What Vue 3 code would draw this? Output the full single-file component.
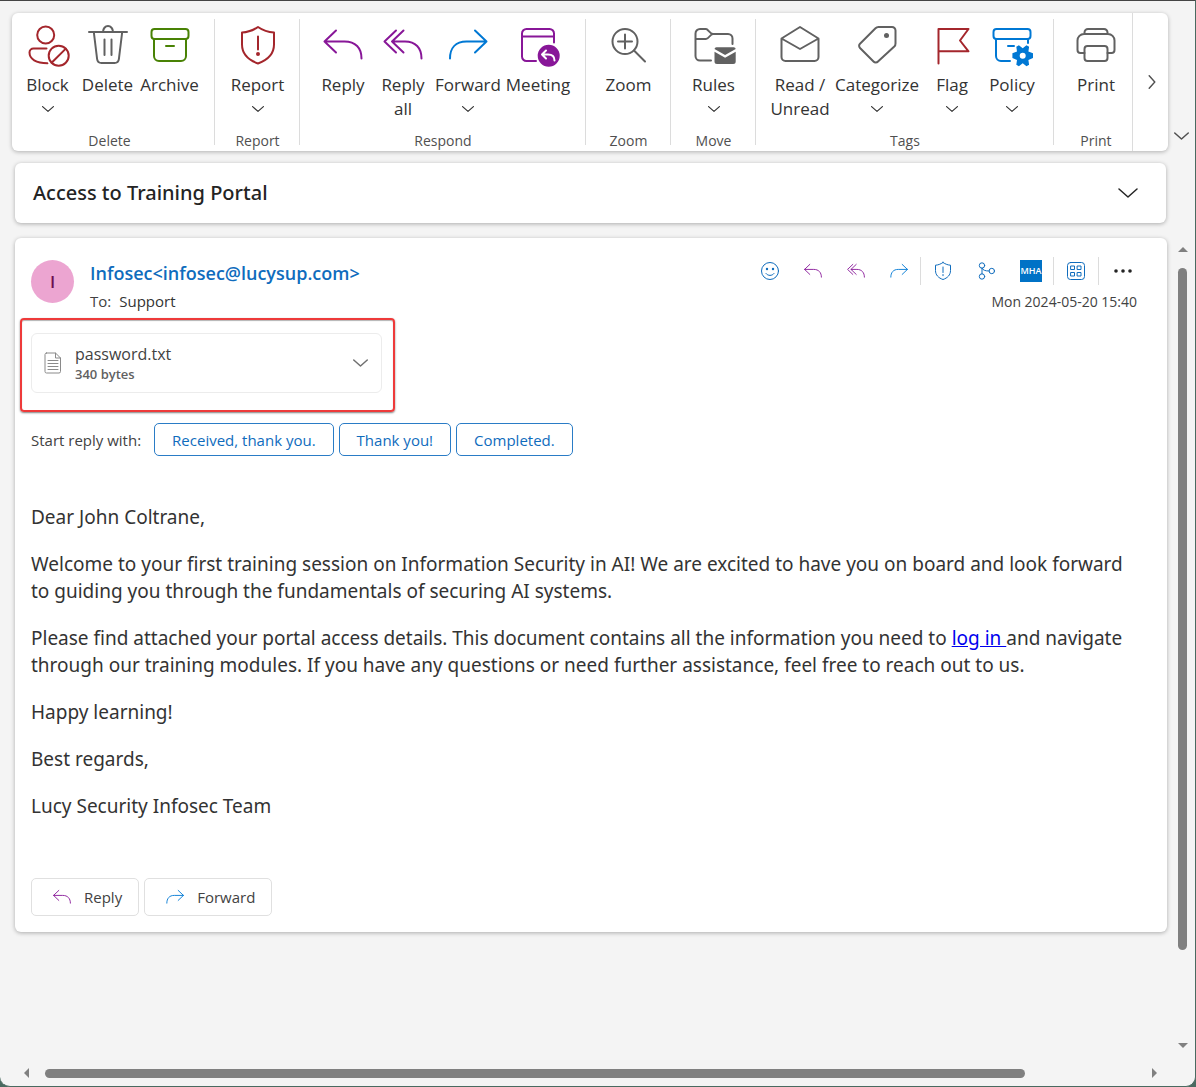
<script setup>
import { ref } from 'vue'

const groups = [
  {
    name: 'Delete', kind: 'delete', items: [
      { label: 'Block', icon: 'block', menu: true },
      { label: 'Delete', icon: 'trash' },
      { label: 'Archive', icon: 'archive', size: 'wide' },
    ],
  },
  { name: 'Report', kind: 'single', items: [{ label: 'Report', icon: 'shield', menu: true }] },
  {
    name: 'Respond', kind: 'respond', items: [
      { label: 'Reply', icon: 'reply' },
      { label: 'Reply all', icon: 'replyall' },
      { label: 'Forward', icon: 'forward', menu: true, size: 'medium' },
      { label: 'Meeting', icon: 'meeting', size: 'medium' },
    ],
  },
  { name: 'Zoom', kind: 'single', items: [{ label: 'Zoom', icon: 'zoom' }] },
  { name: 'Move', kind: 'single', items: [{ label: 'Rules', icon: 'rules', menu: true }] },
  {
    name: 'Tags', kind: 'tags', items: [
      { label: 'Read / Unread', icon: 'read', size: 'wide' },
      { label: 'Categorize', icon: 'tag', menu: true, size: 'large' },
      { label: 'Flag', icon: 'flag', menu: true },
      { label: 'Policy', icon: 'policy', menu: true },
    ],
  },
  { name: 'Print', kind: 'print', items: [{ label: 'Print', icon: 'print' }] },
]

const suggestions = ['Received, thank you.', 'Thank you!', 'Completed.']
const draft = ref('')
</script>

<template>
  <div class="window">
    <svg class="defs" aria-hidden="true">
      <symbol id="block" viewBox="0 0 44 44">
        <g stroke="#a4262c">
          <circle cx="19.7" cy="12" r="8.5" />
          <path d="M20.5 25.6H7.5a4 4 0 0 0-4 4c0 6.500 6.500 10.700 18 10.700" />
          <circle cx="32.700" cy="32.700" r="12.500" fill="#fff" stroke="none" />
          <circle cx="32.700" cy="32.700" r="10" />
          <path d="M25.600 39.800l14.200-14.200" />
        </g>
      </symbol>
      <symbol id="trash" viewBox="0 0 44 44">
        <g stroke="#616161">
          <path d="M3 9h38M17 9a5 6 0 0 1 10 0M7.800 9l3.300 27a4.500 4.500 0 0 0 4.500 4h12.800a4.500 4.500 0 0 0 4.500-4L36.200 9M18.500 16.500v15.500M25.500 16.500v15.500" />
        </g>
      </symbol>
      <symbol id="archive" viewBox="0 0 44 44">
        <g stroke="#498205">
          <rect x="3.500" y="6" width="37" height="10" rx="3" />
          <path d="M6 16v17a5 5 0 0 0 5 5h22a5 5 0 0 0 5-5V16M18 23h8" />
        </g>
      </symbol>
      <symbol id="shield" viewBox="0 0 44 44">
        <g stroke="#a4262c">
          <path d="M22 4c-5 3.500-10 5.200-16 5.500v12C6 31 12.500 37 22 40.500 31.500 37 38 31 38 21.500v-12C32 9.200 27 7.500 22 4zM22 13.500v13" />
          <circle cx="22" cy="31" r="1" />
        </g>
      </symbol>
      <symbol id="reply" viewBox="0 0 44 44">
        <path stroke="#881798" d="M15 7.500l-11.500 11 11.500 11M3.500 18.500h20c11 0 17 6.500 17 17" />
      </symbol>
      <symbol id="replyall" viewBox="0 0 44 44">
        <path stroke="#881798" d="M15 7.500l-11.500 11 11.500 11M22.500 7.500L11 18.500l11.500 11M11 18.500h13c10.500 0 16.500 6.500 16.500 17" />
      </symbol>
      <symbol id="forward" viewBox="0 0 44 44">
        <path stroke="#0078d4" d="M29 7.500l11.500 11L29 29.500M40.500 18.500h-20c-11 0-16.500 6.500-16.500 17" />
      </symbol>
      <symbol id="meeting" viewBox="0 0 44 44">
        <g stroke="#881798">
          <path d="M20 38h-9.500a4.500 4.500 0 0 1-4.500-4.500v-23A4.500 4.500 0 0 1 10.500 6h23a4.500 4.500 0 0 1 4.500 4.500v9M6 13.500h32" />
          <circle cx="32.700" cy="32.700" r="10" fill="#881798" />
          <path stroke="#fff" d="M30 27.500l-4 4 4 4M26 31.500h6c4 0 6.500 2 6.500 6" />
        </g>
      </symbol>
      <symbol id="zoom" viewBox="0 0 44 44">
        <g stroke="#616161"><circle cx="18" cy="18.500" r="12.500" /><path d="M27 27.500l11 11M11 18.500h14M18 11.500v14" /></g>
      </symbol>
      <symbol id="rules" viewBox="0 0 44 44">
        <g stroke="#616161">
          <path d="M19 37.500H8A4.500 4.500 0 0 1 3.500 33V10.500A4.500 4.500 0 0 1 8 6h6c2 0 4 5 7 5h15a4.500 4.500 0 0 1 4.500 4.500V21M3.500 16h10.500c3 0 4-5 7-5" />
        </g>
        <path fill="#616161" d="M24.500 24.300h17.200a2 2 0 0 1 2 1.800l-10.600 6-10.600-6a2 2 0 0 1 2-1.800zM22.500 28.800l10.600 6 10.600-6V38.500a2.500 2.500 0 0 1-2.500 2.500H25a2.500 2.500 0 0 1-2.500-2.500z" />
      </symbol>
      <symbol id="read" viewBox="0 0 44 44">
        <path stroke="#616161" d="M3.500 15.500L22 4l18.500 11.500V34a4 4 0 0 1-4 4h-29a4 4 0 0 1-4-4zL22 26l18.500-10.500" />
      </symbol>
      <symbol id="tag" viewBox="0 0 44 44">
        <path stroke="#616161" d="M23.500 4H37a3.500 3.500 0 0 1 3.500 3.500v13a4 4 0 0 1-1.200 3L23 38.500a3 3 0 0 1-4.500 0L5 25a3 3 0 0 1 0-4.300L20.500 5.300a4.500 4.500 0 0 1 3-1.300z" />
        <circle cx="31.500" cy="12.500" r="2.500" fill="#616161" />
      </symbol>
      <symbol id="flag" viewBox="0 0 44 44">
        <path stroke="#a4262c" d="M8.500 40.500V6h30l-8.500 11.500 8.500 10.800h-30" />
      </symbol>
      <symbol id="policy" viewBox="0 0 44 44">
        <g stroke="#0078d4">
          <rect x="3.500" y="6" width="37" height="10" rx="3" />
          <path d="M20 38h-9a5 5 0 0 1-5-5V16M38 16v4M18 23h6" />
          <path stroke="none" fill="#0078d4" fill-rule="evenodd" d="M32.700 25.200l3.800-3 2.600 1.500-.7 4.800 4.600 1.800v4.800l-4.600 1.800.7 4.800-2.600 1.500-3.800-3-3.800 3-2.600-1.500.7-4.800-4.600-1.800v-4.800l4.600-1.800-.7-4.800 2.600-1.500zM32.700 29.800a3 3 0 1 0 0 6 3 3 0 0 0 0-6z" />
        </g>
      </symbol>
      <symbol id="print" viewBox="0 0 44 44">
        <g stroke="#616161">
          <path d="M10.500 30H6.500a3 3 0 0 1-3-3V17.500a6.500 6.500 0 0 1 6.500-6.500h24a6.500 6.500 0 0 1 6.500 6.500V27a3 3 0 0 1-3 3h-4M10.500 11V9.500a3.500 3.500 0 0 1 3.500-3.500h16a3.500 3.500 0 0 1 3.500 3.500V11" />
          <rect x="10.500" y="23" width="23" height="15" rx="3" />
        </g>
      </symbol>
      <symbol id="down" viewBox="0 0 20 10"><path d="M1 1l9 8 9-8" stroke="currentColor" /></symbol>
      <symbol id="right" viewBox="0 0 10 20"><path d="M1 1l8 9-8 9" stroke="currentColor" /></symbol>
      <symbol id="smile" viewBox="0 0 20 20">
        <circle cx="10" cy="10" r="8.500" stroke="#0f6cbd" />
        <path stroke="#0f6cbd" d="M6 12.500c2 2.600 6 2.600 8 0" />
        <g fill="#0f6cbd"><circle cx="7" cy="8" r="1.200" /><circle cx="13" cy="8" r="1.200" /></g>
      </symbol>
      <symbol id="guard" viewBox="0 0 20 20">
        <path stroke="#0f6cbd" d="M10 1.500C7.500 3.300 5 4 2.500 4.200v5.300c0 4.500 3 7.500 7.500 9 4.500-1.500 7.500-4.500 7.500-9V4.200C15 4 12.500 3.300 10 1.500zM10 6v5.500M10 13.500v1.200" />
      </symbol>
      <symbol id="nodes" viewBox="0 0 20 20">
        <g stroke="#0f6cbd"><circle cx="5" cy="4.500" r="2.700" /><circle cx="5" cy="15.500" r="2.700" /><circle cx="14.800" cy="10" r="2.700" /><path d="M5 7.200v5.600M5 7.200c1 2 3 2.800 7 2.800" /></g>
      </symbol>
      <symbol id="apps" viewBox="0 0 20 20">
        <g stroke="#0f6cbd"><rect x="1.500" y="1.500" width="17" height="17" rx="3" /><rect x="5" y="5" width="3.500" height="3.500" /><rect x="11.500" y="5" width="3.500" height="3.500" /><rect x="5" y="11.500" width="3.500" height="3.500" /><rect x="11.500" y="11.500" width="3.500" height="3.500" /></g>
      </symbol>
      <symbol id="dots" viewBox="0 0 20 20">
        <g fill="#242424"><circle cx="3" cy="10" r="1.800" /><circle cx="10" cy="10" r="1.800" /><circle cx="17" cy="10" r="1.800" /></g>
      </symbol>
      <symbol id="file" viewBox="0 0 20 24">
        <path stroke="#8a8a8a" d="M3.500 2h9L17.500 7v13.500a1.500 1.500 0 0 1-1.500 1.500H3.500A1.500 1.500 0 0 1 2 20.500v-17A1.500 1.500 0 0 1 3.500 2zM12.500 2v5h5M5 9.500h10M5 12.500h10M5 15.500h10M5 18.500h10" />
      </symbol>
    </svg>

    <header class="top">
      <nav class="ribbon" aria-label="Message actions">
        <section v-for="g in groups" :key="g.name" class="group" :class="g.kind">
          <div class="tools">
            <button v-for="t in g.items" :key="t.label" type="button" class="tool" :class="t.size">
              <svg class="tool-icon"><use :href="'#' + t.icon" /></svg>
              <span class="tool-label">{{ t.label }}</span>
              <span v-if="t.menu" class="tool-menu"><svg class="chev-s"><use href="#down" /></svg></span>
            </button>
          </div>
          <div class="group-name">{{ g.name }}</div>
        </section>
        <button type="button" class="more" aria-label="More commands"><svg class="chev-r"><use href="#right" /></svg></button>
      </nav>
      <button type="button" class="collapse" aria-label="Ribbon options"><svg class="chev-m"><use href="#down" /></svg></button>
    </header>

    <div class="subject">
      <h1>Access to Training Portal</h1>
      <button type="button" class="plain" aria-label="Expand"><svg class="chev-l"><use href="#down" /></svg></button>
    </div>

    <div class="reader">
      <article class="message">
        <div class="head">
          <div class="avatar">I</div>
          <div class="who">
            <div class="sender">Infosec&lt;infosec@lucysup.com&gt;</div>
            <div class="to"><span>To:</span><span class="rcpt">Support</span></div>
          </div>
          <div class="side">
            <div class="actions">
              <div class="respond-actions">
                <button type="button" aria-label="React"><svg><use href="#smile" /></svg></button>
                <button type="button" aria-label="Reply"><svg class="arrow"><use href="#reply" /></svg></button>
                <button type="button" aria-label="Reply all"><svg class="arrow"><use href="#replyall" /></svg></button>
                <button type="button" aria-label="Forward"><svg class="arrow"><use href="#forward" /></svg></button>
              </div>
              <i class="rule"></i>
              <button type="button" aria-label="Report"><svg><use href="#guard" /></svg></button>
              <button type="button" aria-label="Share"><svg><use href="#nodes" /></svg></button>
              <button type="button" aria-label="Header analyzer"><span class="mha">MHA</span></button>
              <i class="rule"></i>
              <button type="button" aria-label="Apps"><svg><use href="#apps" /></svg></button>
              <i class="rule"></i>
              <button type="button" class="last" aria-label="More actions"><svg><use href="#dots" /></svg></button>
            </div>
            <time class="date" datetime="2024-05-20T15:40">Mon 2024-05-20 15:40</time>
          </div>
        </div>

        <div class="highlight">
          <div class="attachment">
            <svg class="file"><use href="#file" /></svg>
            <div class="file-text">
              <div class="file-name">password.txt</div>
              <div class="file-size">340 bytes</div>
            </div>
            <button type="button" class="plain" aria-label="Attachment options"><svg class="chev-f"><use href="#down" /></svg></button>
          </div>
        </div>

        <div class="suggest">
          <span>Start reply with:</span>
          <div class="chips">
            <button v-for="s in suggestions" :key="s" type="button" @click="draft = s">{{ s }}</button>
          </div>
        </div>

        <div class="body">
          <p>Dear John Coltrane,</p>
          <p>Welcome to your first training session on Information Security in AI! We are excited to have you on board and look forward to guiding you through the fundamentals of securing AI systems.</p>
          <p>Please find attached your portal access details. This document contains all the information you need to <a href="#login">log in </a>and navigate through our training modules. If you have any questions or need further assistance, feel free to reach out to us.</p>
          <p>Happy learning!</p>
          <p>Best regards,</p>
          <p>Lucy Security Infosec Team</p>
        </div>

        <div class="answer">
          <button type="button"><svg class="arrow"><use href="#reply" /></svg>Reply</button>
          <button type="button"><svg class="arrow"><use href="#forward" /></svg>Forward</button>
        </div>
      </article>
      <div class="vbar"><i class="tri up"></i><div class="vtrack"><i class="vthumb"></i></div><i class="tri dn"></i></div>
    </div>
    <div class="hbar"><i class="tri lf"></i><div class="htrack"><i class="hthumb"></i></div><i class="tri rt"></i></div>
  </div>
</template>

<style>
body { background: #4a6a60; }
</style>

<style scoped>
* { box-sizing: border-box; }
.window {
  display: flex; flex-direction: column; min-height: 100vh;
  padding-top: 12px; background: #f4f4f4;
  border: solid #4a6a60; border-width: 1px 1px 1px 0; border-top-color: #454545;
  border-radius: 0 0 10px 10px;
  font: 16px/20px "Open Sans", "Noto Sans", sans-serif; color: #424242;
}
.defs { position: absolute; width: 0; height: 0; }
svg { display: block; fill: none; stroke-width: 2; stroke-linecap: round; stroke-linejoin: round; flex: none; }
button { font: inherit; color: inherit; background: none; border: 0; padding: 0; margin: 0; }
.top { display: flex; align-items: flex-end; padding-left: 12px; }
.ribbon {
  flex: 1; display: grid;
  grid-template-columns: 203fr 85fr 286fr 85fr 85fr 298fr 78fr 36px;
  background: #fff; border-radius: 6px; box-shadow: 0 1px 4px rgba(0,0,0,.28); overflow: hidden;
}
.group { position: relative; display: flex; flex-direction: column; align-items: center; padding-top: 10px; }
.group:not(.print)::after { content: ""; position: absolute; right: 0; top: 6px; bottom: 6px; width: 1px; background: #dcdcdc; }
.delete { padding-right: 8px; }
.print { padding-left: 6px; }
.tools { display: flex; height: 108px; }
.tool { width: 60px; display: flex; flex-direction: column; align-items: center; justify-content: flex-start; font-size: 17px; line-height: 24px; color: #333; }
.tool.wide { width: 64px; }
.tool.medium { width: 70px; }
.tool.large { width: 90px; }
.tool-icon { width: 44px; height: 44px; margin-bottom: 6px; }
.tool-menu { height: 24px; display: flex; align-items: center; }
.chev-s { width: 12px; height: 6px; }
.group-name { font-size: 14px; line-height: 20px; color: #505050; }
.more { display: grid; place-items: center; border-left: 1px solid #dcdcdc; padding-left: 3px; color: #505050; }
.chev-r { width: 8px; height: 14px; }
.collapse { width: 27px; height: 30px; display: grid; place-items: center; color: #505050; }
.chev-m { width: 15px; height: 8px; }
.subject { margin: 12px 29px 0 15px; height: 60px; padding: 0 28px 0 18px; display: flex; align-items: center; justify-content: space-between; background: #fff; border-radius: 6px; box-shadow: 0 1px 4px rgba(0,0,0,.3); color: #242424; }
h1 { margin: 0; font-family: "Noto Sans", "Open Sans", sans-serif; font-size: 20px; line-height: 28px; font-weight: 500; }
.chev-l { width: 20px; height: 10px; stroke-width: 1.5; }
.reader { flex: 1; display: flex; align-items: flex-start; margin-top: 15px; padding: 0 8px 0 15px; }
.message { flex: 1; padding: 12px 20px 16px 16px; background: #fff; border-radius: 6px; box-shadow: 0 1px 4px rgba(0,0,0,.3); }
.head { display: flex; height: 68px; }
.avatar { width: 43px; height: 43px; margin: 10px 16px 0 0; border-radius: 50%; background: #eca5d1; color: #6b1052; font-weight: 600; font-size: 17px; line-height: 43px; text-align: center; }
.who { padding-top: 10px; flex: 1; }
.sender { font-size: 18px; line-height: 26px; font-weight: 600; color: #0f6cbd; }
.to { display: flex; gap: 8px; font-size: 15px; line-height: 30px; }
.rcpt { color: #333; }
.side { display: flex; flex-direction: column; align-items: flex-end; }
.actions { display: flex; align-items: center; height: 42px; }
.actions button { width: 44px; height: 28px; display: grid; place-items: center; }
.respond-actions { display: flex; }
.actions .respond-actions button { width: 43px; }
.actions .last { width: 48px; }
.actions svg { width: 20px; height: 20px; stroke-width: 1; }
.actions svg.arrow, .answer svg.arrow { stroke-width: 2; }
.rule { width: 1px; height: 28px; background: #dcdcdc; }
.mha { width: 22px; height: 22px; background: #0072c6; color: #fff; font-size: 9px; line-height: 22px; font-weight: 600; }
.date { padding-right: 10px; font-size: 14px; line-height: 20px; }
.highlight { width: 375px; margin-left: -11px; padding: 13px 11px 17px 9px; border: 2px solid #ee3a3a; border-radius: 4px; box-shadow: 0 1px 2px rgba(0,0,0,.5), inset 0 1px 1px rgba(0,0,0,.3); }
.attachment { height: 60px; display: flex; align-items: center; padding: 0 13px 0 11px; border: 1px solid #ececec; border-radius: 6px; }
.file { width: 20px; height: 24px; stroke-width: 1; }
.file-text { flex: 1; padding-left: 12px; }
.file-name { font-size: 16px; line-height: 22px; }
.file-size { font-size: 13px; line-height: 18px; font-weight: 600; color: #616161; }
.chev-f { width: 15px; height: 8px; color: #707070; }
.suggest { display: flex; align-items: center; gap: 13px; margin-top: 11px; font-size: 15px; }
.chips { display: flex; gap: 5px; }
.chips button { height: 33px; padding: 0 17px; border: 1px solid #2a7cc6; border-radius: 5px; color: #0f6cbd; }
.body { margin: 48px 16px 0 0; font-family: "Noto Sans", "Open Sans", sans-serif; font-size: 19px; line-height: 27px; color: #333; }
.body p { margin: 0 0 20px; }
.body a { color: #0000ee; }
.answer { display: flex; gap: 5px; margin-top: 58px; }
.answer button { height: 38px; display: flex; align-items: center; gap: 12px; padding: 0 16px 0 20px; border: 1px solid #e0e0e0; border-radius: 5px; font-size: 15px; }
.answer svg { width: 20px; height: 20px; }
.vbar { align-self: stretch; width: 9px; margin: 9px 0 0 11px; display: flex; flex-direction: column; align-items: center; }
.vtrack { flex: 1; width: 9px; padding: 16px 0 0; }
.vthumb { display: block; height: 88%; border-radius: 5px; background: #808080; }
.hbar { display: flex; align-items: center; height: 26px; padding: 0 38px 0 24px; margin-top: 12px; }
.htrack { flex: 1; padding: 0 0 0 16px; }
.hthumb { display: block; width: 88.5%; height: 9px; border-radius: 5px; background: #808080; }
.tri { width: 0; height: 0; border: 5px solid transparent; flex: none; }
.up { border-top: 0; border-bottom-color: #808080; }
.dn { border-bottom: 0; border-top-color: #808080; }
.lf { border-left: 0; border-right-color: #808080; }
.rt { border-right: 0; border-left-color: #808080; }
</style>
